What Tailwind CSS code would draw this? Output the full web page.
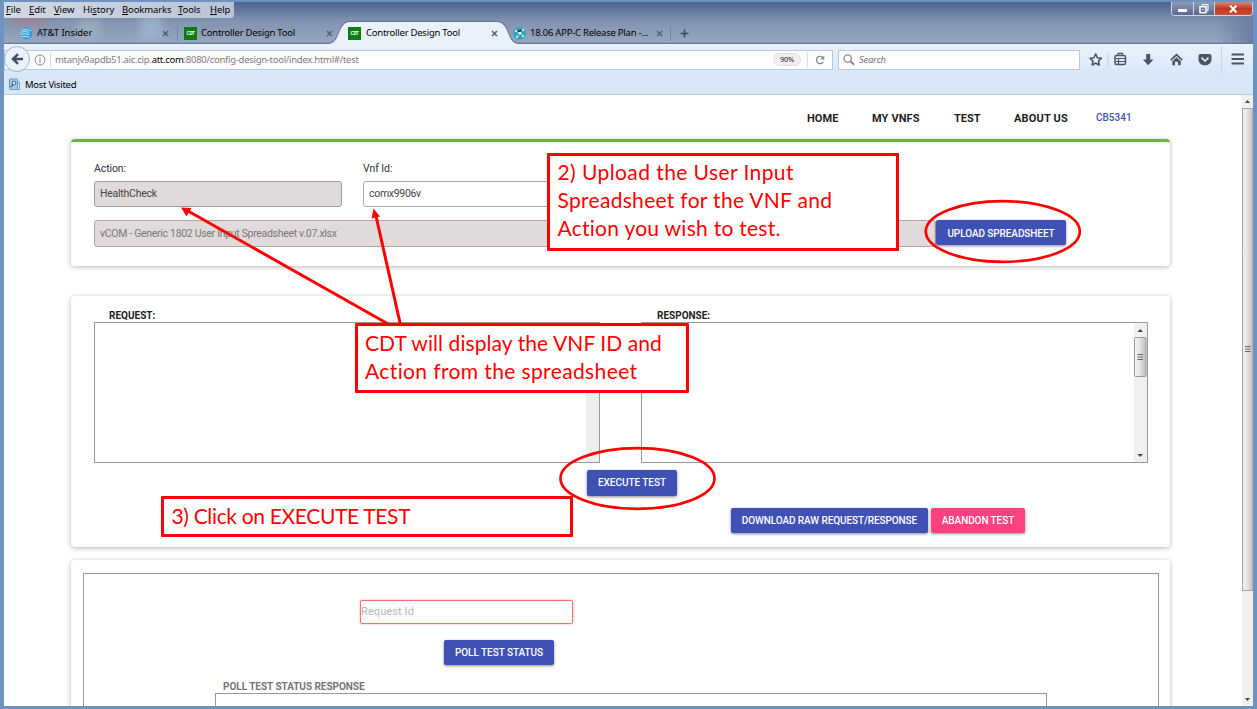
<!DOCTYPE html>
<html lang="en">
<head>
<meta charset="utf-8">
<title>Controller Design Tool</title>
<script src="https://cdn.jsdelivr.net/npm/@tailwindcss/browser@4"></script>
</head>
<body class="w-[1257px] h-[709px] overflow-hidden bg-[#6f93c1] font-['Roboto',sans-serif]">
<div class="relative w-[1257px] h-[709px] pt-[2px] pl-1 pr-1 pb-[3px] flex flex-col overflow-hidden">

  <!-- Window title area -->
  <header class="relative h-[42px] shrink-0 flex flex-col bg-linear-to-b from-[#4b6491] via-[#8393b0] via-45% to-[#98a8bf] font-['Noto_Sans','Open_Sans',sans-serif] text-black">
    <div class="absolute inset-0 bg-linear-to-r from-transparent from-97% to-[#6c7da4]"></div>
    <div class="absolute left-[8px] top-[12px] w-[34px] h-[10px] bg-[#b5757f]/60 blur-[4px]"></div>
    <div class="absolute left-[74px] top-[16px] w-[22px] h-[22px] bg-[#a5b7c6]/60 blur-[4px]"></div>
    <div class="absolute left-[136px] top-[14px] w-[22px] h-[24px] bg-[#a9bfdb]/60 blur-[4px]"></div>
    <div class="relative flex items-center h-[16px] w-[230px] rounded-br-[3px] bg-linear-to-r from-[#d3d9e5] to-[#b9c3d6] text-[9.5px] leading-[16px] tracking-[-0.12px] whitespace-nowrap pl-[2px]">
      <span class="w-[23px]"><u>F</u>ile</span>
      <span class="w-[25px]"><u>E</u>dit</span>
      <span class="w-[29px]"><u>V</u>iew</span>
      <span class="w-[39px]">Hi<u>s</u>tory</span>
      <span class="w-[56px]"><u>B</u>ookmarks</span>
      <span class="w-[32px]"><u>T</u>ools</span>
      <span><u>H</u>elp</span>
    </div>
    <svg class="absolute left-0 top-0" width="1249" height="42" viewBox="4 2 1249 42" fill="none">
      <path d="M4 43.5H328C341 43.500 337 21.500 350 21.500H497C510 21.500 506 43.500 519 43.500H1253" stroke="#667694" stroke-width="1.500"/>
      <path d="M328 44C341 44 337 22 350 22H497C510 22 506 44 519 44Z" fill="#e9f2fc"/>
      <path d="M177.500 26v15M670.500 26v15" stroke="#72819d"/>
    </svg>
    <div class="relative flex items-center h-[26px] pt-[4px] text-[9.500px] tracking-[-0.240px] whitespace-nowrap">
      <div class="flex items-center w-[174px] pl-[16px]">
        <svg width="13" height="13" viewBox="0 0 13 13"><circle cx="6.500" cy="6.500" r="6" fill="#2d9fdb"/><path d="M1.500 3.300Q6 1.600 11 3.600M.5 5.300Q6 3.800 9 5.300M.5 7.200Q6 6.200 9.500 7.500M1.500 9.600Q6 8.600 9.500 10.300" stroke="#c9e7f8" stroke-width="1" fill="none"/></svg>
        <span class="ml-[4px] w-[125px] tracking-[-0.05px]">AT&amp;T Insider</span>
        <svg width="7" height="7" viewBox="0 0 7 7"><path d="M1 1l5 5M6 1l-5 5" stroke="#525f75" stroke-width="1.500"/></svg>
      </div>
      <div class="flex items-center w-[165px] pl-[6px]">
        <span class="w-[13px] h-[13px] bg-[#087d10] text-white text-[4.500px] font-bold flex items-center justify-center">CDT</span>
        <span class="ml-[4px] w-[125px]">Controller Design Tool</span>
        <svg width="7" height="7" viewBox="0 0 7 7"><path d="M1 1l5 5M6 1l-5 5" stroke="#525f75" stroke-width="1.500"/></svg>
      </div>
      <div class="flex items-center w-[164px] pl-[5px]">
        <span class="w-[13px] h-[13px] bg-[#087d10] text-white text-[4.500px] font-bold flex items-center justify-center">CDT</span>
        <span class="ml-[5px] w-[125px]">Controller Design Tool</span>
        <svg width="7" height="7" viewBox="0 0 7 7"><path d="M1 1l5 5M6 1l-5 5" stroke="#525f75" stroke-width="1.500"/></svg>
      </div>
      <div class="flex items-center w-[163px] pl-[6px]">
        <svg width="13" height="13" viewBox="0 0 13 13"><circle cx="6.500" cy="6.500" r="6.200" fill="#2aa3c4"/><path d="M3 4l4 2 3-3M7 6l-3 4M7 6l3 3" stroke="#bdeaf2" stroke-width=".7"/><circle cx="7" cy="6" r="1.600" fill="#fff"/><circle cx="3" cy="4" r="1" fill="#fff"/><circle cx="10" cy="3" r="1" fill="#fff"/><circle cx="4" cy="10" r="1" fill="#fff"/><circle cx="10" cy="9" r="1" fill="#fff"/></svg>
        <span class="ml-[4px] w-[126px]">18.06 APP-C Release Plan -...</span>
        <svg width="7" height="7" viewBox="0 0 7 7"><path d="M1 1l5 5M6 1l-5 5" stroke="#525f75" stroke-width="1.500"/></svg>
      </div>
      <svg class="ml-[10px]" width="9" height="9" viewBox="0 0 9 9"><path d="M4.500 .5v8M.5 4.500h8" stroke="#3c485c" stroke-width="1.500"/></svg>
    </div>
    <!-- Window buttons -->
    <div class="absolute left-[1167px] top-0 flex h-[14px] w-[82px] rounded-b-[4px] border border-t-0 border-[#d0d7e2] overflow-hidden">
      <div class="w-[22px] border-r border-[#cfd6e2] bg-linear-to-b from-[#8c9cb8] to-[#586a8e] flex justify-center items-end pb-[3px]"><i class="block w-[9px] h-[3px] bg-white"></i></div>
      <div class="w-[21px] border-r border-[#cfd6e2] bg-linear-to-b from-[#8c9cb8] to-[#586a8e] flex justify-center items-center"><svg width="10" height="10" viewBox="0 0 10 10" fill="none" stroke="#fff"><path d="M3 2.500V.7h6v6H7.500"/><rect x="1" y="2.700" width="6" height="6" stroke-width="1.500"/><path d="M3.500 5.700h1"/></svg></div>
      <div class="flex-1 bg-linear-to-b from-[#d58878] via-[#bf3622] to-[#c55038] flex justify-center items-center"><svg width="9" height="8" viewBox="0 0 9 8"><path d="M1 .5l6.500 7M7.500 .5L1 7.500" stroke="#fff" stroke-width="2"/></svg></div>
    </div>
  </header>

  <!-- Navigation toolbar -->
  <div class="relative h-[51px] shrink-0 flex flex-col bg-linear-to-b from-[#e9f2fc] to-[#d9e8f7] to-60% border-b border-[#bccad9] font-['Noto_Sans','Open_Sans',sans-serif] text-[9.500px] tracking-[-0.280px] whitespace-nowrap">
    <div class="flex items-center h-[31px]">
      <div class="relative flex items-center w-[829px] h-[20px] bg-white border border-[#b9c8dc] pl-[29px] text-[#7a7a7a]">
        <div class="absolute left-[-1px] -top-[5px] w-[26px] h-[26px] rounded-full border border-[#a3b3ca] bg-[#eaf2fb] flex items-center justify-center"><svg width="13" height="12" viewBox="0 0 13 12"><path d="M12 6H2.500M7 1.200L2 6l5 4.800" stroke="#444d5a" stroke-width="2.500" fill="none"/></svg></div>
        <svg width="12" height="12" viewBox="0 0 12 12" fill="none" stroke="#858585"><circle cx="6" cy="6" r="5"/><path d="M6 5.200v3.600M6 3v1.200" stroke-width="1.200"/></svg>
        <i class="block w-px h-[14px] ml-[4px] mr-[4px] bg-[#d7d7d7]"></i>
        <span class="w-[718px] pt-px">mtanjv9apdb51.aic.cip.<span class="text-black">att.com</span>:8080/config-design-tool/index.html#/test</span>
        <span class="w-[28px] h-[13px] rounded-full bg-[#f0f0f0] border border-[#e0e0e0] text-[7.500px] leading-[11px] text-center text-[#222]">90%</span>
        <i class="block w-px h-[14px] ml-[6px] bg-[#d7dde5]"></i>
        <svg class="ml-[7px]" width="10" height="10" viewBox="0 0 10 10"><path d="M8 2.600A3.700 3.700 0 1 0 8.400 6.800" stroke="#7c8a9c" stroke-width="1.300" fill="none"/><path d="M9.300 .5v4H5.300Z" fill="#7c8a9c"/></svg>
      </div>
      <div class="ml-[5px] flex items-center w-[242px] h-[20px] bg-white border border-[#b9c8dc] pl-[4px] italic text-[#757575]">
        <svg class="mr-[4px]" width="12" height="12" viewBox="0 0 12 12" fill="none" stroke="#8a8a8a"><circle cx="4.700" cy="4.500" r="3.700" stroke-width="1.300"/><path d="M7.500 7.300l3.700 3.500" stroke-width="1.900"/></svg><span class="pt-px">Search</span>
      </div>
      <svg class="ml-[9px]" width="160" height="29" viewBox="1089 45 160 29" fill="#4a5663">
        <path d="M1095.700 54l1.700 3.700 4 .5-2.900 2.800.7 4-3.500-1.900-3.500 1.900.7-4-2.900-2.800 4-.5Z" fill="none" stroke="#444f5c" stroke-width="1.500" stroke-linejoin="round"/>
        <path d="M1108 53v13" stroke="#c4d1df"/>
        <rect x="1115" y="55.500" width="10.500" height="9" rx="1.500" fill="none" stroke="#4a5663" stroke-width="1.500"/><path d="M1118 55v-1.700h4.500V55M1116 58.500h9M1116 61.500h9M1118.500 58v6" fill="none" stroke="#4a5663" stroke-width="1.200"/>
        <path d="M1146.200 54h4v5.500h3.300l-5.300 5.800-5.300-5.800h3.300Z"/>
        <path d="M1176.500 53.500l6.300 6-1.200 1.200-5.100-4.800-5.100 4.800-1.200-1.200Z"/><path d="M1176.500 57.300l4.200 3.900v4h-2.700v-3.400h-3v3.400h-2.700v-4Z"/>
        <path d="M1199.500 54h10q2 0 2 2v3.300c0 8-13 8-13 0V56q0-2 2-2Z"/><path d="M1201.500 57.700l3.500 3.300 3.500-3.300" fill="none" stroke="#e7f0fa" stroke-width="1.600"/>
        <path d="M1221.500 46v27" stroke="#c7d5e5"/>
        <path d="M1231.500 54.500h12.500M1231.500 59h12.500M1231.500 63.500h12.500" stroke="#4a5663" stroke-width="2.200"/>
      </svg>
    </div>
    <div class="flex items-center h-[19px] pl-[5px] text-black">
      <svg width="11" height="13" viewBox="0 0 11 13"><rect x=".5" y="1" width="8" height="10.500" rx="1" fill="#a8cbe7" stroke="#5c93c0"/><path d="M8.500 4h2v7.500h-7" fill="none" stroke="#6fa0c8"/><circle cx="5" cy="5" r="1.900" fill="#e6f2fb" stroke="#34648f"/><path d="M3.800 6.500L1.800 9" stroke="#34648f" stroke-width="1.300"/></svg>
      <span class="ml-[5px] pt-[2px]">Most Visited</span>
    </div>
  </div>

  <!-- Page -->
  <div class="flex flex-1 min-h-0 bg-white">
    <main class="w-[1238px] overflow-hidden flex flex-col px-[67px] pr-[72px]">
      <nav class="flex h-[44px] shrink-0 pl-[736px] pt-[16px] text-[11px] leading-[16px] font-bold text-[#1d1d1d] whitespace-nowrap">
        <span class="w-[65px] tracking-[0.05px]">HOME</span><span class="w-[82px] tracking-[0.12px]">MY VNFS</span><span class="w-[60px]">TEST</span><span class="w-[82px] tracking-[0.180px]">ABOUT US</span>
        <span class="text-[#3f51b5] text-[10px] font-medium leading-[14px]">CB5341</span>
      </nav>

      <section class="h-[127px] shrink-0 rounded-[4px] border-t-[3px] border-[#67b346] shadow-[0_1px_5px_rgba(0,0,0,0.300)] pl-[23px] pt-[19px] text-[10.500px] text-[#444]">
        <div class="flex gap-[21px]">
          <div class="w-[248px]">
            <div class="h-[20px] leading-[16px] tracking-[-0.1px] text-[#333]">Action:</div>
            <div class="h-[26px] rounded-[3px] border border-[#9f9b9b] bg-[#e0dadb] px-[5px] leading-[24px] tracking-[-0.250px]">HealthCheck</div>
          </div>
          <div class="w-[248px]">
            <div class="h-[20px] leading-[16px] tracking-[-0.1px] text-[#333]">Vnf Id:</div>
            <div class="h-[26px] rounded-[3px] border border-[#aaa] px-[5px] leading-[24px] tracking-[-0.300px]">comx9906v</div>
          </div>
        </div>
        <div class="flex mt-[13px]">
          <div class="w-[842px] h-[27px] rounded-[3px] border border-[#aaa6a6] bg-[#e0dadb] px-[5px] leading-[25px] tracking-[-0.310px] text-[#777]">vCOM - Generic 1802 User Input Spreadsheet v.07.xlsx</div>
          <button class="w-[130px] h-[25px] pt-px rounded-[2px] bg-[#3f51b5] text-white text-[10px] tracking-[-0.080px] font-medium shadow-[0_1px_3px_rgba(0,0,0,0.450)]">UPLOAD SPREADSHEET</button>
        </div>
      </section>

      <section class="mt-[30px] h-[251px] shrink-0 rounded-[4px] shadow-[0_1px_5px_rgba(0,0,0,0.300)] pl-[23px] pt-[12px] text-[10px]">
        <div class="flex gap-[41px] font-bold text-[#222]">
          <div class="w-[506px]">
            <div class="h-[14px] leading-[16px] pl-[15px]">REQUEST:</div>
            <div class="h-[141px] border border-[#999] flex justify-end"><i class="block w-[13px] bg-[#eee]"></i></div>
          </div>
          <div class="w-[507px]">
            <div class="h-[14px] leading-[16px] pl-[16px]">RESPONSE:</div>
            <div class="h-[141px] border border-[#999] flex justify-end">
              <svg width="13" height="139" viewBox="0 0 13 139"><defs><linearGradient id="thumb"><stop stop-color="#f4f4f4"/><stop offset=".5" stop-color="#e2e2e4"/><stop offset="1" stop-color="#bcbcc0"/></linearGradient></defs><path d="M0 0h13v139H0Z" fill="#f0f0f0"/><path d="M3.500 9L6.300 6 9 9Z" fill="#444"/><rect x=".5" y="14.500" width="11.500" height="39" rx="1" fill="url(#thumb)" stroke="#999"/><path d="M3.500 31.500h5.500M3.500 34h5.500M3.500 36.500h5.500" stroke="#666"/><path d="M3.500 131h5.500L6.300 134Z" fill="#444"/></svg>
            </div>
          </div>
        </div>
        <div class="pl-[493px] mt-[7px]"><button class="w-[90px] h-[26px] pb-px rounded-[2px] bg-[#3f51b5] text-white text-[10px] tracking-[-0.05px] font-medium shadow-[0_1px_3px_rgba(0,0,0,0.450)]">EXECUTE TEST</button></div>
        <div class="flex gap-[3px] pl-[637px] mt-[12px]">
          <button class="w-[197px] h-[25px] rounded-[2px] bg-[#3f51b5] text-white text-[10px] tracking-[-0.090px] font-medium shadow-[0_1px_3px_rgba(0,0,0,0.450)]">DOWNLOAD RAW REQUEST/RESPONSE</button>
          <button class="w-[94px] h-[25px] rounded-[2px] bg-[#ff4081] text-white text-[10px] tracking-[-0.080px] font-medium shadow-[0_1px_3px_rgba(0,0,0,0.450)]">ABANDON TEST</button>
        </div>
      </section>

      <section class="mt-[13px] h-[300px] shrink-0 rounded-[4px] shadow-[0_1px_5px_rgba(0,0,0,0.300)] px-[12px] pr-[11px] pt-[13px]">
        <div class="h-[280px] border border-[#999] pt-[26px] flex flex-col">
          <div class="ml-[276px] w-[213px] h-[24px] border-[1.500px] border-[#f47070] rounded-[2px] shadow-[0_0_2px_#f88] text-[11px] leading-[22px] tracking-[0.1px] text-[#b5b5b5]">Request Id</div>
          <button class="ml-[360px] mt-[16px] w-[110px] h-[25px] rounded-[2px] bg-[#3f51b5] text-white text-[10px] tracking-[-0.050px] font-medium shadow-[0_1px_3px_rgba(0,0,0,0.450)]">POLL TEST STATUS</button>
          <div class="ml-[139px] mt-[14px] h-[14px] leading-[16px] text-[10px] font-bold tracking-[-0.04px] text-[#757575]">POLL TEST STATUS RESPONSE</div>
          <div class="ml-[131px] w-[832px] h-[100px] border border-[#999]"></div>
        </div>
      </section>
    </main>
    <svg width="11" height="611" viewBox="0 0 11 611"><path d="M0 0h11v611H0Z" fill="#f0f0f0"/><path d="M3 8L5.500 5 8 8Z" fill="#444"/><rect x=".5" y="13.500" width="10.500" height="482" fill="url(#thumb)" stroke="#a5a5a8"/><path d="M3 251.500h5.500M3 254h5.500M3 256.500h5.500" stroke="#666"/><path d="M3 603h5L5.500 606Z" fill="#444"/></svg>
  </div>

  <!-- Annotations laid over the page -->
  <svg class="absolute left-0 top-0" width="1257" height="709" fill="none" stroke="#f00" stroke-width="3">
    <path d="M390 325L188 211M400.500 325L376 216"/>
    <path d="M181 207.500l10.500 0.500-5 8.500Z M373.500 208.500l6.500 8-8.500 2Z" fill="#f00" stroke-width="0"/>
    <ellipse cx="1002.800" cy="231.500" rx="77" ry="30.300" stroke-width="2.700"/>
    <ellipse cx="637.500" cy="478.500" rx="77" ry="30.300" stroke-width="2.700"/>
  </svg>
  <div class="absolute left-[547px] top-[153px] w-[352px] h-[98px] border-[3px] border-[#f00] rounded-[1px] bg-white pl-[7.500px] pt-[2px] font-['Lato',sans-serif] text-[21px] leading-[28px] text-[#f00] whitespace-nowrap"><span class="tracking-[0.420px]">2) Upload the User Input</span><br><span class="tracking-[0.300px]">Spreadsheet for the VNF and</span><br><span class="tracking-[0.270px]">Action you wish to test.</span></div>
  <div class="absolute left-[355px] top-[323px] w-[334px] h-[70px] border-[3px] border-[#f00] rounded-[1px] bg-white pl-[7px] pt-[3px] font-['Lato',sans-serif] text-[21px] leading-[28px] text-[#f00] whitespace-nowrap"><span class="tracking-[0.080px]">CDT will display the VNF ID and</span><br><span class="tracking-[0.380px]">Action from the spreadsheet</span></div>
  <div class="absolute left-[161px] top-[496px] w-[412px] h-[41px] border-[3px] border-[#f00] rounded-[1px] bg-white pl-[7.500px] pt-[3px] font-['Lato',sans-serif] text-[21px] leading-[28px] tracking-[-0.340px] text-[#f00] whitespace-nowrap">3) Click on EXECUTE TEST</div>
</div>
</body>
</html>
